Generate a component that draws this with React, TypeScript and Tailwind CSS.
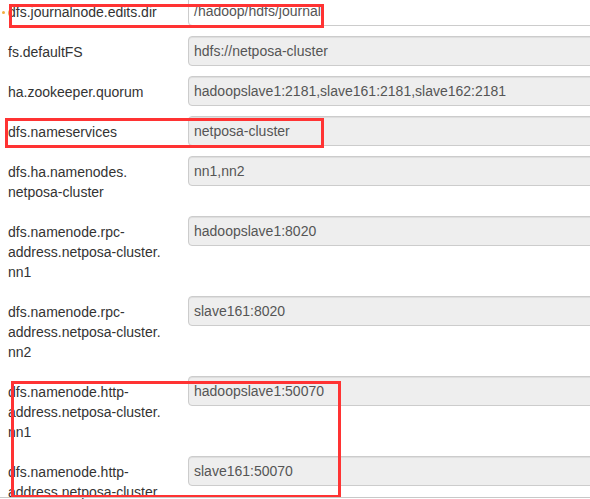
import React from "react";

type Row = { label: string[]; value: string; editable?: boolean };

const rows: Row[] = [
  { label: ["dfs.journalnode.edits.dir"], value: "/hadoop/hdfs/journal", editable: true },
  { label: ["fs.defaultFS"], value: "hdfs://netposa-cluster" },
  { label: ["ha.zookeeper.quorum"], value: "hadoopslave1:2181,slave161:2181,slave162:2181" },
  { label: ["dfs.nameservices"], value: "netposa-cluster" },
  { label: ["dfs.ha.namenodes.", "netposa-cluster"], value: "nn1,nn2" },
  { label: ["dfs.namenode.rpc-", "address.netposa-cluster.", "nn1"], value: "hadoopslave1:8020" },
  { label: ["dfs.namenode.rpc-", "address.netposa-cluster.", "nn2"], value: "slave161:8020" },
  { label: ["dfs.namenode.http-", "address.netposa-cluster.", "nn1"], value: "hadoopslave1:50070" },
  { label: ["dfs.namenode.http-", "address.netposa-cluster.", "nn2"], value: "slave161:50070" },
];

export default function App() {
  return (
    <div
      className="relative w-[590px] h-[499px] overflow-hidden bg-white text-[14px] text-[#333]"
      style={{ fontFamily: '"Liberation Sans", Arial, sans-serif' }}
    >
      <div className="flex flex-col mt-[-4px]">
        {rows.map((r, i) => (
          <div key={i} className="flex mb-[10px]">
            <div className="w-[188px] shrink-0 pl-2 pt-[6px] pb-[4px] leading-5">
              {r.label.map((l, j) => (
                <div key={j}>{l}</div>
              ))}
            </div>
            <div
              className={
                "w-[430px] shrink-0 h-[30px] border border-[#ccc] rounded-[4px] px-[5px] flex items-center text-[#555] shadow-[inset_0_1px_1px_rgba(0,0,0,0.075)] " +
                (r.editable ? "bg-white" : "bg-[#eee]")
              }
            >
              {r.value}
            </div>
          </div>
        ))}
      </div>

      <div className="absolute left-[2px] top-[11px] w-[3px] h-[3px] rounded-full bg-[#f0b040]" />

      <div className="absolute left-[9px] top-[4px] w-[315px] h-[24px] border-[3px] border-[#f33]" />
      <div className="absolute left-[5px] top-[118px] w-[319px] h-[30px] border-[3px] border-[#f33]" />
      <div className="absolute left-[11px] top-[381px] w-[330px] h-[117px] border-[3px] border-[#f33]" />

      <div className="absolute left-0 top-[497px] w-full h-[1px] bg-[#c8c8c8]" />
    </div>
  );
}
